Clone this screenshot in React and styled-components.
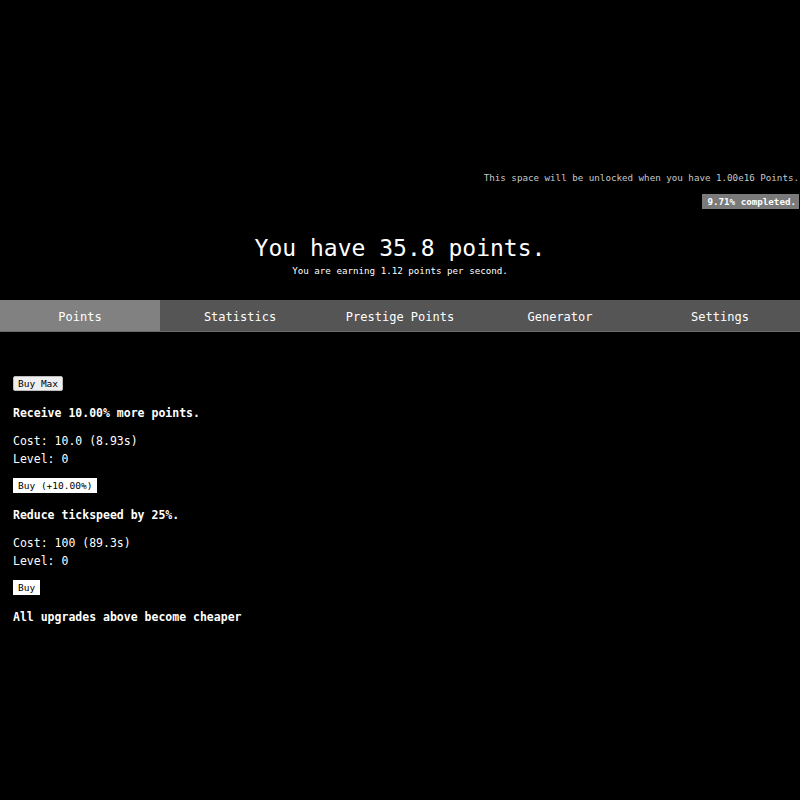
import React from "react";
import styled, { createGlobalStyle } from "styled-components";

const GlobalStyle = createGlobalStyle`
  html, body {
    margin: 0;
    padding: 0;
    background: #000;
  }
  body {
    color: #fff;
    font-family: "DejaVu Sans Mono", "Liberation Mono", monospace;
  }
`;

const Page = styled.div`
  width: 800px;
  min-height: 800px;
  background: #000;
  overflow: hidden;
`;

const Unlock = styled.div`
  display: flex;
  flex-direction: column;
  align-items: flex-end;
  padding-top: 172px;
  padding-right: 1px;
  gap: 11px;
`;

const UnlockText = styled.div`
  font-size: 9.2px;
  color: #c8c8c8;
  line-height: 11px;
`;

const Progress = styled.div`
  background: #7a7a7a;
  color: #fff;
  font-size: 9.2px;
  font-weight: bold;
  line-height: 15px;
  padding: 0 3px 0 5px;
`;

const Header = styled.div`
  display: flex;
  flex-direction: column;
  align-items: center;
  margin-top: 25px;
`;

const Amount = styled.div`
  font-size: 23px;
  line-height: 28px;
`;

const Rate = styled.div`
  font-size: 9.2px;
  line-height: 12px;
  margin-top: 3px;
`;

const Tabs = styled.div`
  display: grid;
  grid-template-columns: repeat(5, 1fr);
  margin-top: 23px;
  border-bottom: 1px solid #6a6a6a;
`;

const Tab = styled.div`
  background: ${(p) => (p.$active ? "#818181" : "#555555")};
  color: #fff;
  text-align: center;
  font-size: 12px;
  line-height: 28px;
  padding-top: 3px;
`;

const Content = styled.div`
  padding: 44px 13px 0;
  display: flex;
  flex-direction: column;
  align-items: flex-start;
`;

const Button = styled.button`
  font-family: "DejaVu Sans Mono", "Liberation Mono", monospace;
  font-size: 9.5px;
  line-height: 13px;
  color: #000;
  background: ${(p) => (p.$plain ? "#fff" : "#efefef")};
  border: 1px solid ${(p) => (p.$plain ? "#fff" : "#bcbcbc")};
  border-radius: ${(p) => (p.$plain ? "0" : "2px")};
  padding: 0 4px;
  margin: 0;
`;

const Title = styled.div`
  font-size: 11.5px;
  font-weight: bold;
  line-height: 14px;
  margin-top: 15px;
`;

const Info = styled.div`
  font-size: 11.5px;
  line-height: 18px;
  margin-top: 12px;
  margin-bottom: 10px;
`;

const upgrades = [
  { button: "Buy Max", plain: false, title: "Receive 10.00% more points.", cost: "10.0 (8.93s)" },
  { button: "Buy (+10.00%)", plain: true, title: "Reduce tickspeed by 25%.", cost: "100 (89.3s)" },
  { button: "Buy", plain: true, title: "All upgrades above become cheaper" },
];

export default function App() {
  return (
    <Page>
      <GlobalStyle />
      <Unlock>
        <UnlockText>This space will be unlocked when you have 1.00e16 Points.</UnlockText>
        <Progress>9.71% completed.</Progress>
      </Unlock>
      <Header>
        <Amount>You have 35.8 points.</Amount>
        <Rate>You are earning 1.12 points per second.</Rate>
      </Header>
      <Tabs>
        {["Points", "Statistics", "Prestige Points", "Generator", "Settings"].map((t, i) => (
          <Tab key={t} $active={i === 0}>
            {t}
          </Tab>
        ))}
      </Tabs>
      <Content>
        {upgrades.map((u) => (
          <React.Fragment key={u.button}>
            <Button $plain={u.plain}>{u.button}</Button>
            <Title>{u.title}</Title>
            {u.cost && (
              <Info>
                Cost: {u.cost}
                <br />
                Level: 0
              </Info>
            )}
          </React.Fragment>
        ))}
      </Content>
    </Page>
  );
}
